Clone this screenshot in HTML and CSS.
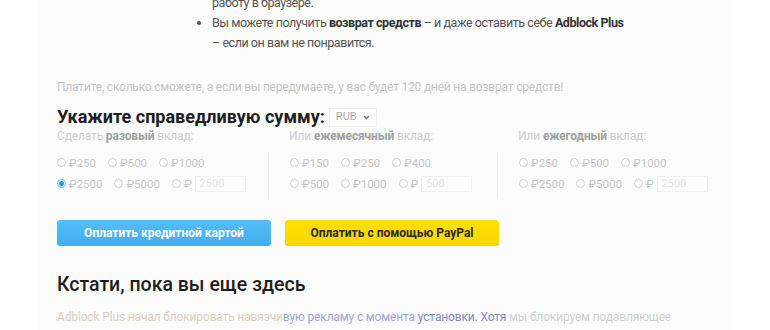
FILE: index.html
```html
<!DOCTYPE html>
<html lang="ru">
<head>
    <meta charset="UTF-8">
    <meta name="viewport" content="width=device-width, initial-scale=1.0">
    <title>Adblock Plus — поддержка</title>
    <link rel="stylesheet" href="styles.css">
</head>
<body>
<div class="page">
    <ul class="perks">
        <li class="perk-tail">работу в браузере.</li>
        <li>Вы можете получить <b>возврат средств</b> – и даже оставить себе <b>Adblock Plus</b><br>– если он вам не понравится.</li>
    </ul>

    <p class="note">Платите, сколько сможете, а если вы передумаете, у вас будет 120 дней на возврат средств!</p>

    <h2 class="amount-title">Укажите справедливую сумму:
        <span class="currency">RUB
            <svg width="7" height="5" viewBox="0 0 7 5"><path d="M1 1l2.5 2.5L6 1" fill="none" stroke="#777" stroke-width="1.3"/></svg>
        </span>
    </h2>

    <div class="amounts">
        <div class="tier">
            <div class="tier-label">Сделать <b>разовый</b> вклад:</div>
            <div class="tier-options">
                <div class="row">
                    <label><input type="radio" name="once">₽250</label>
                    <label><input type="radio" name="once">₽500</label>
                    <label><input type="radio" name="once">₽1000</label>
                </div>
                <div class="row">
                    <label><input type="radio" name="once" checked>₽2500</label>
                    <label><input type="radio" name="once">₽5000</label>
                    <label><input type="radio" name="once">₽ <input class="custom" type="text" placeholder="2500"></label>
                </div>
            </div>
        </div>
        <div class="tier">
            <div class="tier-label">Или <b>ежемесячный</b> вклад:</div>
            <div class="tier-options">
                <div class="row">
                    <label><input type="radio" name="once">₽150</label>
                    <label><input type="radio" name="once">₽250</label>
                    <label><input type="radio" name="once">₽400</label>
                </div>
                <div class="row">
                    <label><input type="radio" name="once">₽500</label>
                    <label><input type="radio" name="once">₽1000</label>
                    <label><input type="radio" name="once">₽ <input class="custom" type="text" placeholder="500"></label>
                </div>
            </div>
        </div>
        <div class="tier">
            <div class="tier-label">Или <b>ежегодный</b> вклад:</div>
            <div class="tier-options">
                <div class="row">
                    <label><input type="radio" name="once">₽250</label>
                    <label><input type="radio" name="once">₽500</label>
                    <label><input type="radio" name="once">₽1000</label>
                </div>
                <div class="row">
                    <label><input type="radio" name="once">₽2500</label>
                    <label><input type="radio" name="once">₽5000</label>
                    <label><input type="radio" name="once">₽ <input class="custom" type="text" placeholder="2500"></label>
                </div>
            </div>
        </div>
    </div>

    <div class="pay">
        <button class="pay-card">Оплатить кредитной картой</button>
        <button class="pay-paypal">Оплатить с помощью PayPal</button>
    </div>

    <h2 class="aside-title">Кстати, пока вы еще здесь</h2>
    <p class="story"><span class="fade-a">Adblock Plus начал блокировать навязчи</span><span class="fade-b">вую рекламу с момента </span><span class="fade-c">установки. Хотя</span> мы блокируем подавляющее</p>
</div>
</body>
</html>
```

FILE: styles.css
```css
body{
    margin: 0;
    background: #fff;
    font-family: Roboto, "Noto Sans", sans-serif;
    overflow: hidden;
}
.page{
    width: 656px;
    margin: 0 auto;
    padding: 0 20px;
    height: 340px;
    background: #fcfcfc;
}
.perks{
    margin: -7px 0 0;
    padding-left: 155px;
    font-size: 12.5px;
    letter-spacing: -0.45px;
    line-height: 20px;
    color: #555;
}
.perks b{ color: #333; }
.perk-tail{ list-style: none; }
.note{
    margin: 24px 0 0;
    font-size: 12px;
    letter-spacing: -0.2px;
    line-height: 20px;
    color: #c4c4c4;
}
.amount-title{
    margin: 9px 0 0;
    font-size: 18px;
    line-height: 22px;
    font-weight: 700;
    color: #1e1e1e;
    display: flex;
    align-items: center;
}
.currency{
    display: inline-flex;
    align-items: center;
    gap: 6px;
    margin-left: 4px;
    padding: 0 6px;
    height: 17px;
    border: 1px solid #eee;
    background: #fff;
    font-size: 11px;
    font-weight: 400;
    color: #a8a8a8;
}
.amounts{
    display: grid;
    grid-template-columns: 211px 229px 216px;
}
.tier + .tier{ padding-left: 21px; }
.tier-label{
    font-size: 12px;
    letter-spacing: -0.15px;
    line-height: 16px;
    color: #cdcdcd;
}
.tier-label b{ color: #a0a0a0; }
.tier-options{
    margin-top: 8px;
    padding-bottom: 4px;
}
.tier + .tier .tier-options{
    margin-left: -21px;
    padding-left: 21px;
    border-left: 1px solid #f0f0f0;
}
.row{
    display: flex;
    height: 21px;
    align-items: center;
    font-size: 11.5px;
    color: #c6c6c6;
}
.row label{
    display: flex;
    align-items: center;
    margin-right: 12px;
}
input[type="radio"]{
    appearance: none;
    width: 9px;
    height: 9px;
    margin: 0 3px 0 0;
    border: 1px solid #cfcfcf;
    border-radius: 50%;
    background: #fff;
}
input[type="radio"]:checked{
    border-color: #a9d3f2;
    background: #2f93e0;
    box-shadow: inset 0 0 0 1px #fff;
}
.custom{
    width: 51px;
    height: 16px;
    box-sizing: border-box;
    margin-left: 3px;
    padding: 0 4px;
    border: 1px solid #f0f0f0;
    font: 11px Roboto, sans-serif;
    color: #ccc;
    background: #fff;
}
.custom::placeholder{ color: #e2e2e2; }
.pay{
    display: flex;
    gap: 14px;
    margin-top: 22px;
}
.pay button{
    width: 214px;
    height: 26px;
    border: 0;
    border-radius: 3px;
    font-family: Roboto, sans-serif;
    font-size: 12px;
    font-weight: 700;
}
.pay-card{
    background: linear-gradient(#55bdf9, #42adf1);
    color: #fff;
}
.pay-paypal{
    background: linear-gradient(#ffe000, #fad600);
    color: #2a2a2a;
}
.aside-title{
    margin: 26px 0 0;
    font-size: 19.5px;
    line-height: 26px;
    font-weight: 500;
    color: #1c1c1c;
}
.story{
    margin: 9px 0 0;
    font-size: 12px;
    letter-spacing: -0.15px;
    line-height: 20px;
    color: #d0d0d0;
}
.fade-a{ color: #dccfba; }
.fade-b{ color: #9ea3d8; }
.fade-c{ color: #7f88c9; }
```
